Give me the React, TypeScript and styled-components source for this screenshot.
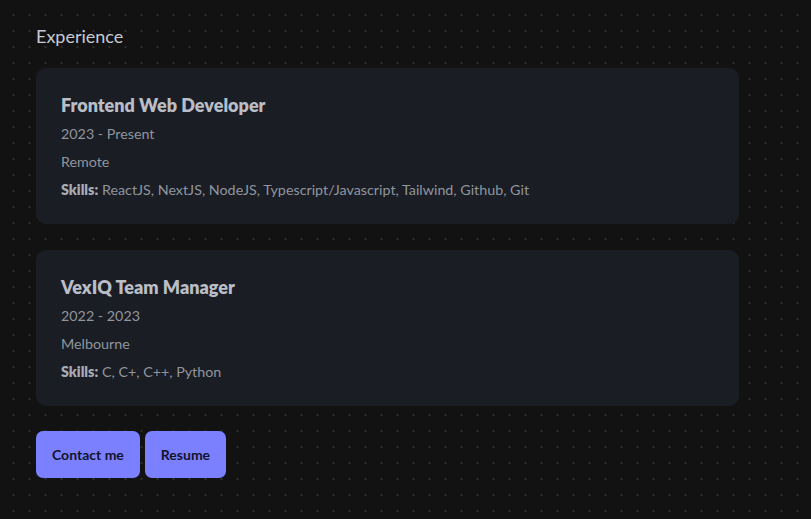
import React from "react";
import styled, { createGlobalStyle } from "styled-components";

const Global = createGlobalStyle`
  html, body { margin: 0; padding: 0; }
  body {
    background-color: #121212;
    background-image: radial-gradient(circle, #2c2c2c 1px, transparent 1.2px);
    background-size: 16px 16px;
    background-position: 5.5px 7px;
    min-height: 519px;
    font-family: "Lato", "Noto Sans", sans-serif;
  }
`;

const Page = styled.main`
  padding: 25px 72px 40px 36px;
  display: flex;
  flex-direction: column;
`;

const Heading = styled.h2`
  margin: 0 0 21px;
  font-size: 18px;
  font-weight: 400;
  line-height: 22px;
  color: #c6cad2;
`;

const List = styled.div`
  display: flex;
  flex-direction: column;
  gap: 26px;
  width: 703px;
`;

const Card = styled.section`
  background: #1a1d24;
  border-radius: 10px;
  height: 156px;
  box-sizing: border-box;
  padding: 25px 25px;
  display: flex;
  flex-direction: column;
`;

const Title = styled.h3`
  margin: 0 0 3px;
  font-size: 18px;
  font-weight: 800;
  line-height: 24px;
  color: #b9bdc6;
`;

const Line = styled.p`
  margin: 0;
  font-size: 14.3px;
  line-height: 28px;
  color: #90959e;
`;

const Label = styled.b`
  font-weight: 800;
  color: #a6abb4;
`;

const Buttons = styled.div`
  display: flex;
  gap: 5px;
  margin-top: 25px;
`;

const Button = styled.button`
  height: 47px;
  padding: 0 16px;
  border: none;
  border-radius: 7px;
  background: #7a80ff;
  color: #12132a;
  font-family: inherit;
  font-size: 14px;
  font-weight: 700;
  cursor: pointer;
`;

const jobs = [
  {
    title: "Frontend Web Developer",
    years: "2023 - Present",
    place: "Remote",
    skills: "ReactJS, NextJS, NodeJS, Typescript/Javascript, Tailwind, Github, Git",
  },
  {
    title: "VexIQ Team Manager",
    years: "2022 - 2023",
    place: "Melbourne",
    skills: "C, C+, C++, Python",
  },
];

export default function App() {
  return (
    <>
      <Global />
      <Page>
        <Heading>Experience</Heading>
        <List>
          {jobs.map((j) => (
            <Card key={j.title}>
              <Title>{j.title}</Title>
              <Line>{j.years}</Line>
              <Line>{j.place}</Line>
              <Line>
                <Label>Skills:</Label> {j.skills}
              </Line>
            </Card>
          ))}
        </List>
        <Buttons>
          <Button>Contact me</Button>
          <Button>Resume</Button>
        </Buttons>
      </Page>
    </>
  );
}
